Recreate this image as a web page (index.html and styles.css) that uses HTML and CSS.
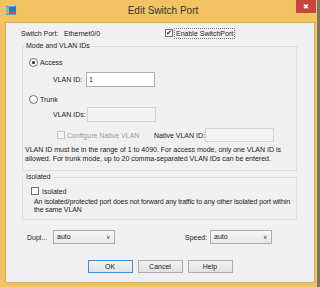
FILE: index.html
```html
<html>
<head>
  <link rel="stylesheet" href="styles.css">
</head>
<body>
  <div class="window">
    <div class="titlebar">
      <svg class="app-icon" width="10" height="10" viewBox="0 0 10 10">
        <rect x="0" y="0" width="10" height="10" fill="#5a9fc8"/>
        <rect x="0" y="2" width="3" height="7" fill="#8cc26a"/>
        <rect x="3" y="2" width="7" height="4" fill="#2a78c0"/>
        <rect x="3" y="6" width="7" height="3" fill="#d94a4a"/>
        <rect x="1" y="0" width="8" height="1" fill="#b9d8ec"/>
      </svg>
      <div class="title">Edit Switch Port</div>
      <div class="close">&#x2716;</div>
    </div>
    <div class="content">
      <div class="top-row">
        <span class="port-label">Switch Port:</span>
        <span class="port-value">Ethernet0/0</span>
        <span class="box checked">&#x2714;</span>
        <span class="focus">Enable SwitchPort</span>
      </div>

      <fieldset class="group mode">
        <legend>Mode and VLAN IDs</legend>
        <div class="radio-row access">
          <span class="radio on"></span>Access
        </div>
        <div class="field-row first">
          <span class="field-label">VLAN ID:</span>
          <div class="input">1</div>
        </div>
        <div class="radio-row trunk">
          <span class="radio"></span>Trunk
        </div>
        <div class="field-row second">
          <span class="field-label">VLAN IDs:</span>
          <div class="input disabled"></div>
        </div>
        <div class="native-row">
          <span class="box disabled"></span>
          <span class="muted">Configure Native VLAN</span>
          <span class="native-label">Native VLAN ID:</span>
          <div class="input disabled wide"></div>
        </div>
        <p class="note">VLAN ID must be in the range of 1 to 4090. For access mode, only one VLAN ID is allowed. For trunk mode, up to 20 comma-separated VLAN IDs can be entered.</p>
      </fieldset>

      <fieldset class="group isolated">
        <legend>Isolated</legend>
        <div class="check-row">
          <span class="box"></span>Isolated
        </div>
        <p class="desc">An isolated/protected port does not forward any traffic to any other isolated port within the same VLAN</p>
      </fieldset>

      <div class="select-row">
        <span class="duplex-label">Dupl...</span>
        <div class="select">auto<span class="chev">&#x2228;</span></div>
        <span class="speed-label">Speed:</span>
        <div class="select">auto<span class="chev">&#x2228;</span></div>
      </div>

      <div class="buttons">
        <div class="btn default">OK</div>
        <div class="btn">Cancel</div>
        <div class="btn">Help</div>
      </div>
    </div>
  </div>
</body>
</html>
```

FILE: styles.css
```css
body {
  margin: 0;
  background-color: #7d7565;
  font-family: "Liberation Sans", Arial, sans-serif;
  font-size: 7px;
  color: #1a1a1a;
}
.window {
  width: 317px;
  height: 287px;
  background-color: #f1c461;
  display: flex;
  flex-direction: column;
}
.titlebar {
  height: 22px;
  display: flex;
  align-items: flex-start;
}
.app-icon {
  margin: 5px 0 0 6px;
}
.title {
  flex: 1;
  text-align: center;
  font-size: 10px;
  line-height: 21px;
  color: #333;
  padding-left: 14px;
}
.close {
  width: 20px;
  height: 13px;
  margin-right: 1px;
  background-color: #c8443f;
  color: #fff;
  font-size: 7px;
  line-height: 13px;
  text-align: center;
}
.content {
  margin-left: 5px;
  width: 310px;
  height: 261px;
  box-sizing: border-box;
  border: 1px solid #d3ad5a;
  background-color: #f0f0f0;
  display: flex;
  flex-direction: column;
}
.top-row {
  display: flex;
  align-items: center;
  height: 10px;
  margin-top: 5px;
  padding-left: 15px;
}
.port-label {
  width: 43px;
}
.port-value {
  width: 101px;
}
.box {
  width: 8px;
  height: 8px;
  box-sizing: border-box;
  border: 1px solid #707070;
  background-color: #fff;
  display: inline-block;
  font-size: 7px;
  line-height: 6px;
  text-align: center;
  margin-right: 2px;
  flex-shrink: 0;
}
.box.checked {
  color: #222;
}
.box.disabled {
  border-color: #c4c4c4;
  background-color: #f4f4f4;
}
.focus {
  outline: 1px dotted #777;
  padding: 0 1px;
  line-height: 9px;
}
.group {
  margin: 3px 0 0 16px;
  width: 275px;
  box-sizing: border-box;
  border: 1px solid #dcdcdc;
  padding: 0 0 0 6px;
}
.group legend {
  padding: 0 2px;
  margin-left: -5px;
  line-height: 10px;
  color: #1a1a1a;
}
.radio-row {
  display: flex;
  align-items: center;
  height: 10px;
}
.radio-row.access {
  margin-top: 6px;
}
.radio-row.trunk {
  margin-top: 7px;
}
.radio {
  width: 9px;
  height: 9px;
  box-sizing: border-box;
  border: 1px solid #6f6f6f;
  border-radius: 50%;
  background-color: #fff;
  margin-right: 2px;
  position: relative;
}
.radio.on::after {
  content: "";
  position: absolute;
  left: 2px;
  top: 2px;
  width: 3px;
  height: 3px;
  border-radius: 50%;
  background-color: #222;
}
.field-row {
  display: flex;
  align-items: center;
  padding-left: 24px;
}
.field-row.first {
  margin-top: 5px;
}
.field-row.second {
  margin-top: 3px;
}
.field-label {
  width: 33px;
}
.field-row.second .field-label {
  width: 34px;
}
.input {
  width: 69px;
  height: 15px;
  box-sizing: border-box;
  border: 1px solid #abadb3;
  background-color: #fff;
  padding-left: 2px;
  line-height: 13px;
}
.input.disabled {
  border-color: #d2d2d2;
  background-color: #f2f2f2;
}
.native-row {
  display: flex;
  align-items: center;
  margin-top: 6px;
  padding-left: 28px;
  height: 14px;
}
.native-row .input {
  height: 14px;
}
.muted {
  color: #9a9a9a;
  width: 87px;
}
.native-label {
  width: 51px;
}
.note {
  margin: 3px 0 7px -4px;
  line-height: 9px;
  width: 258px;
}
.group.isolated {
  margin-top: 1px;
  padding-left: 8px;
}
.group.isolated legend {
  margin-left: -7px;
}
.check-row {
  display: flex;
  align-items: center;
  height: 10px;
  margin-top: 4px;
}
.check-row .box {
  margin-right: 3px;
}
.desc {
  margin: 2px 0 5px 3px;
  line-height: 8px;
  width: 262px;
  letter-spacing: -0.1px;
}
.select-row {
  display: flex;
  align-items: center;
  margin-top: 10px;
  padding-left: 21px;
}
.duplex-label {
  width: 26px;
}
.speed-label {
  margin-left: 70px;
  width: 25px;
}
.select {
  width: 62px;
  height: 14px;
  box-sizing: border-box;
  border: 1px solid #acacac;
  background: linear-gradient(#f6f6f6, #e9e9e9);
  padding-left: 3px;
  line-height: 12px;
  display: flex;
  justify-content: space-between;
}
.chev {
  font-size: 6px;
  padding-right: 4px;
  color: #333;
}
.buttons {
  display: flex;
  justify-content: center;
  gap: 5px;
  margin-top: 16px;
}
.btn {
  width: 45px;
  height: 13px;
  box-sizing: border-box;
  border: 1px solid #acacac;
  background: linear-gradient(#f1f1f1, #e3e3e3);
  text-align: center;
  line-height: 11px;
}
.btn.default {
  border-color: #3c8fdc;
}
```
